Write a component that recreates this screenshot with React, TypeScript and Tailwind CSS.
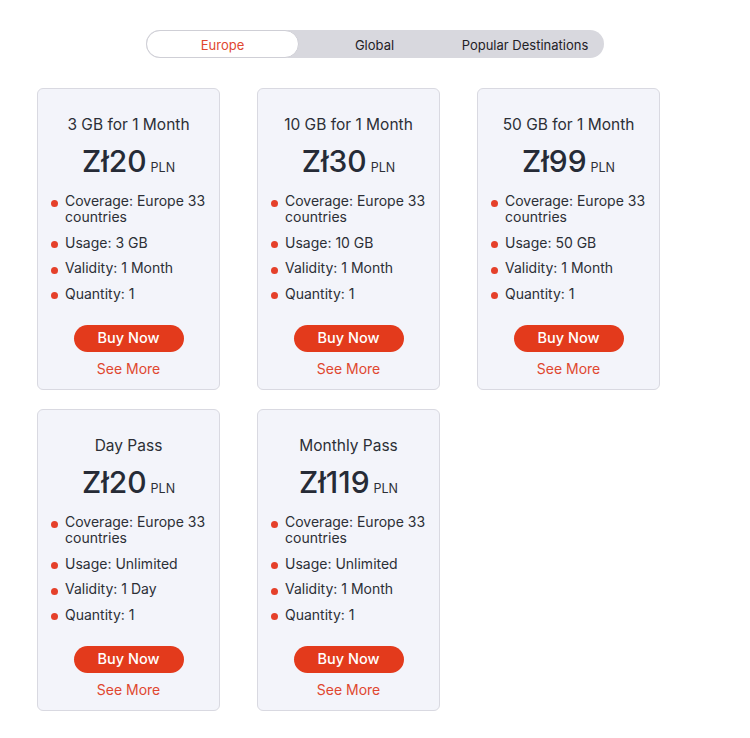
import React from "react";

type Plan = {
  title: string;
  price: string;
  usage: string;
  validity: string;
};

const plans: Plan[] = [
  { title: "3 GB for 1 Month", price: "Zł20", usage: "3 GB", validity: "1 Month" },
  { title: "10 GB for 1 Month", price: "Zł30", usage: "10 GB", validity: "1 Month" },
  { title: "50 GB for 1 Month", price: "Zł99", usage: "50 GB", validity: "1 Month" },
  { title: "Day Pass", price: "Zł20", usage: "Unlimited", validity: "1 Day" },
  { title: "Monthly Pass", price: "Zł119", usage: "Unlimited", validity: "1 Month" },
];

function Bullet({ children }: { children: React.ReactNode }) {
  return (
    <li className="flex items-start gap-[7px]">
      <span className="mt-[6.5px] h-[7px] w-[7px] shrink-0 rounded-full bg-[#e5402a]" />
      <span>{children}</span>
    </li>
  );
}

function Card({ plan }: { plan: Plan }) {
  return (
    <div className="flex h-[302px] w-[183px] flex-col items-center rounded-[6px] border border-[#d9d9e1] bg-[#f3f4fa] pt-[26px]">
      <div className="text-[15.5px] leading-[20px] text-[#2c2f36]">{plan.title}</div>
      <div className="mt-[9px] flex items-baseline gap-[4px]">
        <span className="text-[30px] leading-[34px] font-medium text-[#262b36]">{plan.price}</span>
        <span className="text-[12.5px] text-[#2c2f36]">PLN</span>
      </div>
      <ul className="mt-[15px] flex w-full flex-col gap-[9.5px] pl-[13px] pr-[6px] text-[14px] leading-[16px] text-[#2c2f36]">
        <Bullet>Coverage: Europe 33 countries</Bullet>
        <Bullet>Usage: {plan.usage}</Bullet>
        <Bullet>Validity: {plan.validity}</Bullet>
        <Bullet>Quantity: 1</Bullet>
      </ul>
      <button className="mt-[23px] h-[27px] w-[110px] rounded-full bg-[#e33a1c] text-[14.5px] font-medium text-white">
        Buy Now
      </button>
      <div className="mt-[8px] text-[14px] leading-[18px] text-[#e0472f]">See More</div>
    </div>
  );
}

export default function App() {
  return (
    <div
      className="min-h-[738px] w-[750px] bg-white"
      style={{ fontFamily: "Inter, 'Noto Sans', sans-serif" }}
    >
      <div className="flex justify-center pt-[30px]">
        <div className="flex h-[28px] w-[458px] items-center rounded-full bg-[#d8d8de] text-[13px] leading-[16px] text-[#1f2126]">
          <div className="flex h-full w-[153px] items-center justify-center rounded-full border border-[#cfcfd6] bg-white pt-[1px] text-[#e0472f]">
            Europe
          </div>
          <div className="flex h-full w-[151px] items-center justify-center pt-[1px]">Global</div>
          <div className="flex h-full flex-1 items-center justify-center pr-[4px] pt-[1px]">Popular Destinations</div>
        </div>
      </div>
      <div className="mt-[30px] grid grid-cols-[183px_183px_183px] gap-x-[37px] gap-y-[19px] pl-[37px]">
        {plans.map((p) => (
          <Card key={p.title} plan={p} />
        ))}
      </div>
    </div>
  );
}
